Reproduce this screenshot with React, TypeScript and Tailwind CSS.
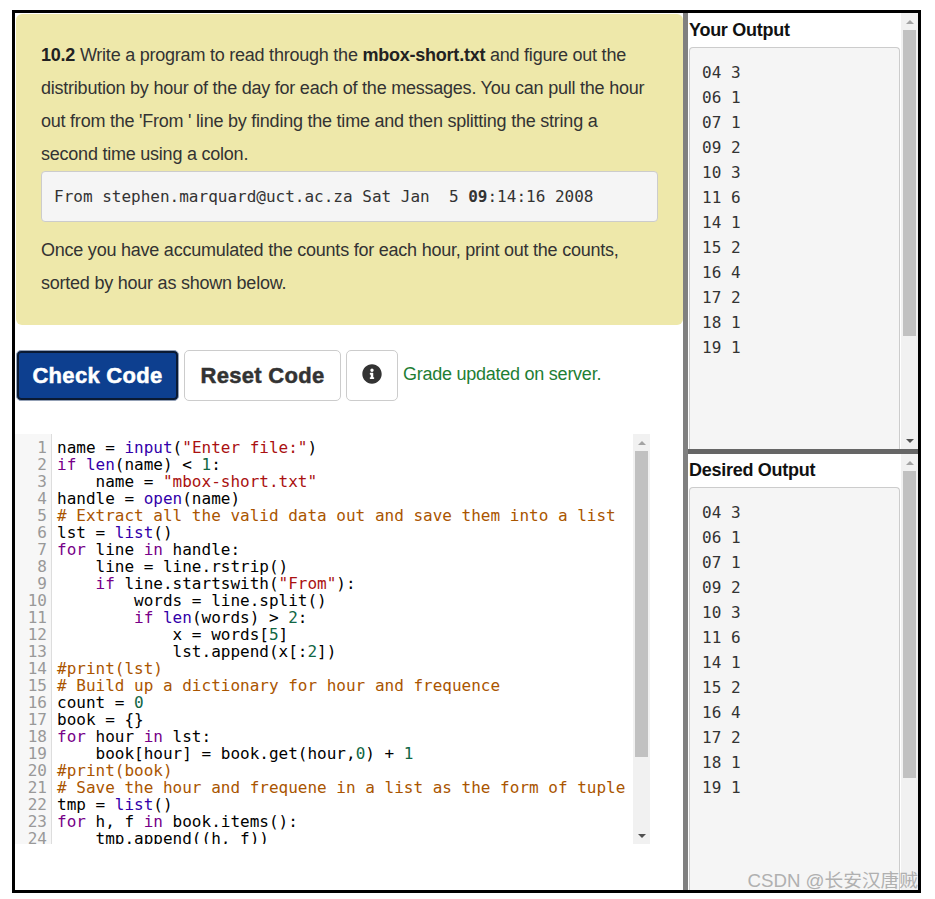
import { FaInfoCircle } from 'react-icons/fa'

const outputLines = ['04 3', '06 1', '07 1', '09 2', '10 3', '11 6', '14 1', '15 2', '16 4', '17 2', '18 1', '19 1']

type Tok = [string, string?]

const K = 'text-[#770088]'
const B = 'text-[#3300aa]'
const S = 'text-[#aa1111]'
const C = 'text-[#aa5500]'
const N = 'text-[#116644]'

const codeLines: Tok[][] = [
  [['name = '], ['input', B], ['('], ['"Enter file:"', S], [')']],
  [['if', K], [' '], ['len', B], ['(name) < '], ['1', N], [':']],
  [['    name = '], ['"mbox-short.txt"', S]],
  [['handle = '], ['open', B], ['(name)']],
  [['# Extract all the valid data out and save them into a list', C]],
  [['lst = '], ['list', B], ['()']],
  [['for', K], [' line '], ['in', K], [' handle:']],
  [['    line = line.rstrip()']],
  [['    '], ['if', K], [' line.startswith('], ['"From"', S], ['):']],
  [['        words = line.split()']],
  [['        '], ['if', K], [' '], ['len', B], ['(words) > '], ['2', N], [':']],
  [['            x = words['], ['5', N], [']']],
  [['            lst.append(x[:'], ['2', N], ['])']],
  [['#print(lst)', C]],
  [['# Build up a dictionary for hour and frequence', C]],
  [['count = '], ['0', N]],
  [['book = {}']],
  [['for', K], [' hour '], ['in', K], [' lst:']],
  [['    book[hour] = book.get(hour,'], ['0', N], [') + '], ['1', N]],
  [['#print(book)', C]],
  [['# Save the hour and frequene in a list as the form of tuple', C]],
  [['tmp = '], ['list', B], ['()']],
  [['for', K], [' h, f '], ['in', K], [' book.items():']],
  [['    tmp.append((h, f))']],
]

const mono = "font-['DejaVu_Sans_Mono',monospace]"

function ScrollBar({ thumb }: { thumb: string }) {
  return (
    <div className="flex w-[17px] shrink-0 flex-col items-center bg-[#f1f1f1]">
      <div className="flex h-[17px] w-full shrink-0 items-center justify-center">
        <div className="h-0 w-0 border-x-[4px] border-b-[4px] border-x-transparent border-b-[#a3a3a3]" />
      </div>
      <div className={`w-[13px] bg-[#c1c1c1] ${thumb}`} />
      <div className="flex-1" />
      <div className="flex h-[17px] w-full shrink-0 items-center justify-center">
        <div className="h-0 w-0 border-x-[4px] border-t-[4px] border-x-transparent border-t-[#505050]" />
      </div>
    </div>
  )
}

function OutputPane({ title, thumb, pane, head }: { title: string; thumb: string; pane: string; head: string }) {
  return (
    <div className={`flex shrink-0 overflow-hidden bg-white ${pane}`}>
      <div className="flex min-w-0 flex-1 flex-col pr-[1px] pl-[1px]">
        <h3 className={`text-[18px] leading-[20px] font-bold tracking-[-0.27px] text-[#111] ${head}`}>{title}</h3>
        <pre className={`${mono} flex-1 rounded-t-[4px] border border-b-0 border-[#cccccc] bg-[#f5f5f5] px-[12px] pt-[12px] text-[16px] leading-[25px] text-[#333]`}>
          {outputLines.join('\n')}
        </pre>
      </div>
      <ScrollBar thumb={thumb} />
    </div>
  )
}

export default function App() {
  return (
    <div className="h-[899px] w-[935px] bg-white pt-[10px] pl-[12px] font-['Liberation_Sans',Arial,sans-serif]">
      <div className="relative flex h-[883px] w-[909px] overflow-hidden border-[3px] border-black bg-white text-[#333]">
        <div className="w-[668px] shrink-0">
          <div className="mt-[1px] ml-[1px] h-[311px] rounded-[6px] bg-[#eee8aa] px-[25px] pt-[25px] text-[18px] leading-[33px] tracking-[-0.23px]">
            <p>
              <b className="text-[#222]">10.2</b> Write a program to read through the <b className="text-[#222]">mbox-short.txt</b> and figure out the
              distribution by hour of the day for each of the messages. You can pull the hour
              out from the 'From ' line by finding the time and then splitting the string a
              second time using a colon.
            </p>
            <pre className={`${mono} mb-[12px] h-[51px] rounded-[4px] border border-[#cccccc] bg-[#f5f5f5] pt-[12px] pl-[12px] text-[16px] leading-[25px] tracking-normal text-[#333]`}>
              From stephen.marquard@uct.ac.za Sat Jan  5 <b>09</b>:14:16 2008
            </pre>
            <p>
              Once you have accumulated the counts for each hour, print out the counts,
              sorted by hour as shown below.
            </p>
          </div>

          <div className="mt-[25px] flex items-center pl-[1px]">
            <button className="h-[51px] w-[163px] rounded-[5px] border border-[#93a0b5] bg-[#0d3f8f] text-[22px] font-bold tracking-[0.3px] text-white shadow-[inset_0_0_0_2px_#0a1a33] [-webkit-text-stroke:0.5px_white]">
              Check Code
            </button>
            <button className="ml-[5px] h-[51px] w-[157px] rounded-[5px] border border-[#cccccc] bg-white text-[22px] font-bold tracking-[0.3px] text-[#333] [-webkit-text-stroke:0.5px_#333]">
              Reset Code
            </button>
            <button className="ml-[5px] flex h-[51px] w-[52px] items-start justify-center rounded-[5px] border border-[#cccccc] bg-white pt-[13px] text-[#333]">
              <FaInfoCircle size={20} />
            </button>
            <span className="ml-[5px] pb-[2px] text-[18px] tracking-[-0.25px] text-[#1e7e34]">Grade updated on server.</span>
          </div>

          <div className={`${mono} mt-[33px] flex h-[410px] w-[635px] overflow-hidden bg-white text-[16px] leading-[17px]`}>
            <div className="w-[37px] shrink-0 overflow-hidden border-r border-[#dddddd] bg-[#f7f7f7] pt-[5px] pr-[4px] text-right text-[#999999]">
              {codeLines.map((_, i) => (
                <div key={i} className="h-[17px]">{i + 1}</div>
              ))}
            </div>
            <div className="min-w-0 flex-1 overflow-hidden pt-[5px] pl-[5px] text-black">
              {codeLines.map((line, i) => (
                <div key={i} className="h-[17px] whitespace-pre">
                  {line.map(([text, cls], j) => (
                    <span key={j} className={cls}>{text}</span>
                  ))}
                </div>
              ))}
            </div>
            <ScrollBar thumb="h-[306px]" />
          </div>
        </div>

        <div className="w-[5px] shrink-0 bg-[#808080]" />

        <div className="flex min-w-0 flex-1 flex-col">
          <OutputPane title="Your Output" thumb="h-[306px]" pane="h-[436px]" head="h-[34px] pt-[7px]" />
          <div className="h-[5px] shrink-0 bg-[#666666]" />
          <OutputPane title="Desired Output" thumb="h-[307px]" pane="h-[460px]" head="h-[33px] pt-[6px]" />
        </div>

        <span className="absolute right-0 -bottom-[3px] text-[18.7px] leading-[24px] whitespace-nowrap text-[#b0b0b0] font-['Liberation_Sans','Noto_Sans_CJK_SC',sans-serif]">
          CSDN @长安汉唐贼
        </span>
      </div>
    </div>
  )
}
